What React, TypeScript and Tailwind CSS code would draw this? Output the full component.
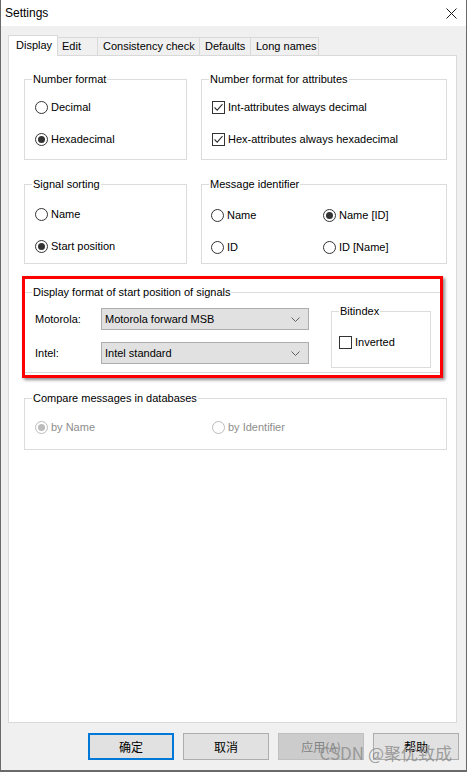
import type { ReactNode } from 'react';

const FONT = "font-['Liberation_Sans',Arial,sans-serif]";

function Radio({ label, checked, disabled }: { label: string; checked?: boolean; disabled?: boolean }) {
  return (
    <div className="flex h-[13px] items-center">
      <span
        className={`flex h-[13px] w-[13px] items-center justify-center rounded-full border bg-white ${
          disabled ? 'border-[#bcbcbc]' : 'border-[#333333]'
        }`}
      >
        {checked && (
          <span className={`h-[7px] w-[7px] rounded-full ${disabled ? 'bg-[#bcbcbc]' : 'bg-[#333333]'}`} />
        )}
      </span>
      <span className={`ml-[3px] text-[11px] leading-[13px] ${disabled ? 'text-[#8d8d8d]' : 'text-black'}`}>{label}</span>
    </div>
  );
}

function Checkbox({ label, checked }: { label: string; checked?: boolean }) {
  return (
    <div className="flex h-[13px] items-center">
      <span className="flex h-[13px] w-[13px] items-center justify-center border border-[#333333] bg-white">
        {checked && (
          <svg width="11" height="11" viewBox="0 0 11 11" fill="none">
            <path d="M1.5 5.5 L4.2 8.2 L9.5 2.2" stroke="#333" strokeWidth="1.1" />
          </svg>
        )}
      </span>
      <span className="ml-[3px] text-[11px] leading-[13px] text-black">{label}</span>
    </div>
  );
}

function Group({ title, className, children }: { title: string; className?: string; children?: ReactNode }) {
  return (
    <div className={`relative border border-[#dcdcdc] ${className ?? ''}`}>
      <span className="absolute -top-[7px] left-[7px] bg-white px-px text-[11px] leading-[13px] text-black">{title}</span>
      {children}
    </div>
  );
}

function Select({ value }: { value: string }) {
  return (
    <div className="flex h-[22px] w-[208px] items-center justify-between border border-[#adadad] bg-[#e1e1e1] pl-[3px] pr-[8px]">
      <span className="text-[11px] leading-[13px] text-black">{value}</span>
      <svg width="9" height="5" viewBox="0 0 9 5" fill="none">
        <path d="M0.5 0.5 L4.5 4.5 L8.5 0.5" stroke="#606060" strokeWidth="1" />
      </svg>
    </div>
  );
}

function Button({ label, primary, disabled }: { label: string; primary?: boolean; disabled?: boolean }) {
  let cls = 'border border-[#adadad] bg-[#e1e1e1] text-black';
  if (primary) cls = 'border-2 border-[#0078d7] bg-[#e1e1e1] text-black';
  if (disabled) cls = 'border border-[#bfbfbf] bg-[#cccccc] text-[#838383]';
  return (
    <div
      className={`flex h-[27px] w-[86px] items-center justify-center font-['Noto_Sans_CJK_SC',sans-serif] text-[12px] ${cls}`}
    >
      {label}
    </div>
  );
}

export default function App() {
  return (
    <div className={`relative h-[772px] w-[467px] overflow-hidden border-x border-b-2 border-[#6a6a6a] bg-[#f0f0f0] ${FONT}`}>
      {/* title bar */}
      <div className="flex h-[26px] items-center justify-between bg-white pl-[4px] pr-[9px]">
        <span className="text-[12px] text-black">Settings</span>
        <svg width="11" height="11" viewBox="0 0 11 11" fill="none">
          <path d="M0.5 0.5 L10.5 10.5 M10.5 0.5 L0.5 10.5" stroke="#1a1a1a" strokeWidth="1" />
        </svg>
      </div>

      <div className="pl-[7px] pr-[9px] pt-[9px]">
        {/* tabs */}
        <div className="flex h-[20px] items-end text-[11px] leading-[13px] text-black">
          <div className="relative z-10 -mb-px flex h-[21px] w-[50px] items-start border-x border-t border-[#d9d9d9] bg-white pl-[7px] pt-[3px]">
            Display
          </div>
          <div className="flex h-[18px] w-[40px] items-center border-r border-t border-[#d9d9d9] pl-[4px]">Edit</div>
          <div className="flex h-[18px] w-[102px] items-center border-r border-t border-[#d9d9d9] pl-[5px]">Consistency check</div>
          <div className="flex h-[18px] w-[51px] items-center border-r border-t border-[#d9d9d9] pl-[5px]">Defaults</div>
          <div className="flex h-[18px] w-[68px] items-center border-r border-t border-[#d9d9d9] pl-[5px]">Long names</div>
        </div>

        {/* panel */}
        <div className="h-[668px] border border-[#d9d9d9] bg-white pl-[15px] pt-[23px]">
          <div className="flex gap-[14px]">
            <Group title="Number format" className="h-[81px] w-[163px]">
              <div className="flex flex-col gap-[19px] pl-[10px] pt-[21px]">
                <Radio label="Decimal" />
                <Radio label="Hexadecimal" checked />
              </div>
            </Group>
            <Group title="Number format for attributes" className="h-[81px] w-[246px]">
              <div className="flex flex-col gap-[19px] pl-[10px] pt-[21px]">
                <Checkbox label="Int-attributes always decimal" checked />
                <Checkbox label="Hex-attributes always hexadecimal" checked />
              </div>
            </Group>
          </div>

          <div className="mt-[24px] flex gap-[14px]">
            <Group title="Signal sorting" className="h-[80px] w-[163px]">
              <div className="flex flex-col gap-[19px] pl-[10px] pt-[23px]">
                <Radio label="Name" />
                <Radio label="Start position" checked />
              </div>
            </Group>
            <Group title="Message identifier" className="h-[80px] w-[246px]">
              <div className="grid grid-cols-[112px_1fr] gap-y-[19px] pl-[9px] pt-[24px]">
                <Radio label="Name" />
                <Radio label="Name [ID]" checked />
                <Radio label="ID" />
                <Radio label="ID [Name]" />
              </div>
            </Group>
          </div>

          <div className="relative mt-[28px] w-[417px]">
            <Group title="Display format of start position of signals" className="h-[81px] w-[417px]">
              <div className="flex items-start pl-[10px] pt-[15px]">
                <div className="flex flex-col gap-[12px]">
                  <div className="flex items-center">
                    <span className="w-[66px] text-[11px] leading-[13px]">Motorola:</span>
                    <Select value="Motorola forward MSB" />
                  </div>
                  <div className="flex items-center">
                    <span className="w-[66px] text-[11px] leading-[13px]">Intel:</span>
                    <Select value="Intel standard" />
                  </div>
                </div>
                <Group title="Bitindex" className="ml-[22px] mt-[3px] h-[57px] w-[100px]">
                  <div className="pl-[7px] pt-[24px]">
                    <Checkbox label="Inverted" />
                  </div>
                </Group>
              </div>
            </Group>
            <div className="pointer-events-none absolute -left-[2px] -top-[16px] h-[102px] w-[421px] border-[3px] border-[#ff0000] shadow-[2px_2px_3px_rgba(0,0,0,0.45)]" />
          </div>

          <Group title="Compare messages in databases" className="mt-[25px] h-[52px] w-[423px]">
            <div className="flex pl-[10px] pt-[22px]">
              <div className="w-[177px]">
                <Radio label="by Name" checked disabled />
              </div>
              <Radio label="by Identifier" disabled />
            </div>
          </Group>
        </div>
      </div>

      {/* buttons */}
      <div className="mt-[10px] flex justify-end gap-[9px] pr-[7px]">
        <Button label="确定" primary />
        <Button label="取消" />
        <Button label="应用(A)" disabled />
        <Button label="帮助" />
      </div>

      <span className="pointer-events-none absolute bottom-[6px] right-[14px] font-['Noto_Sans_CJK_SC',sans-serif] text-[17px] leading-[22px] text-[#8a8a8a]/80">
        CSDN @聚优致成
      </span>
    </div>
  );
}
